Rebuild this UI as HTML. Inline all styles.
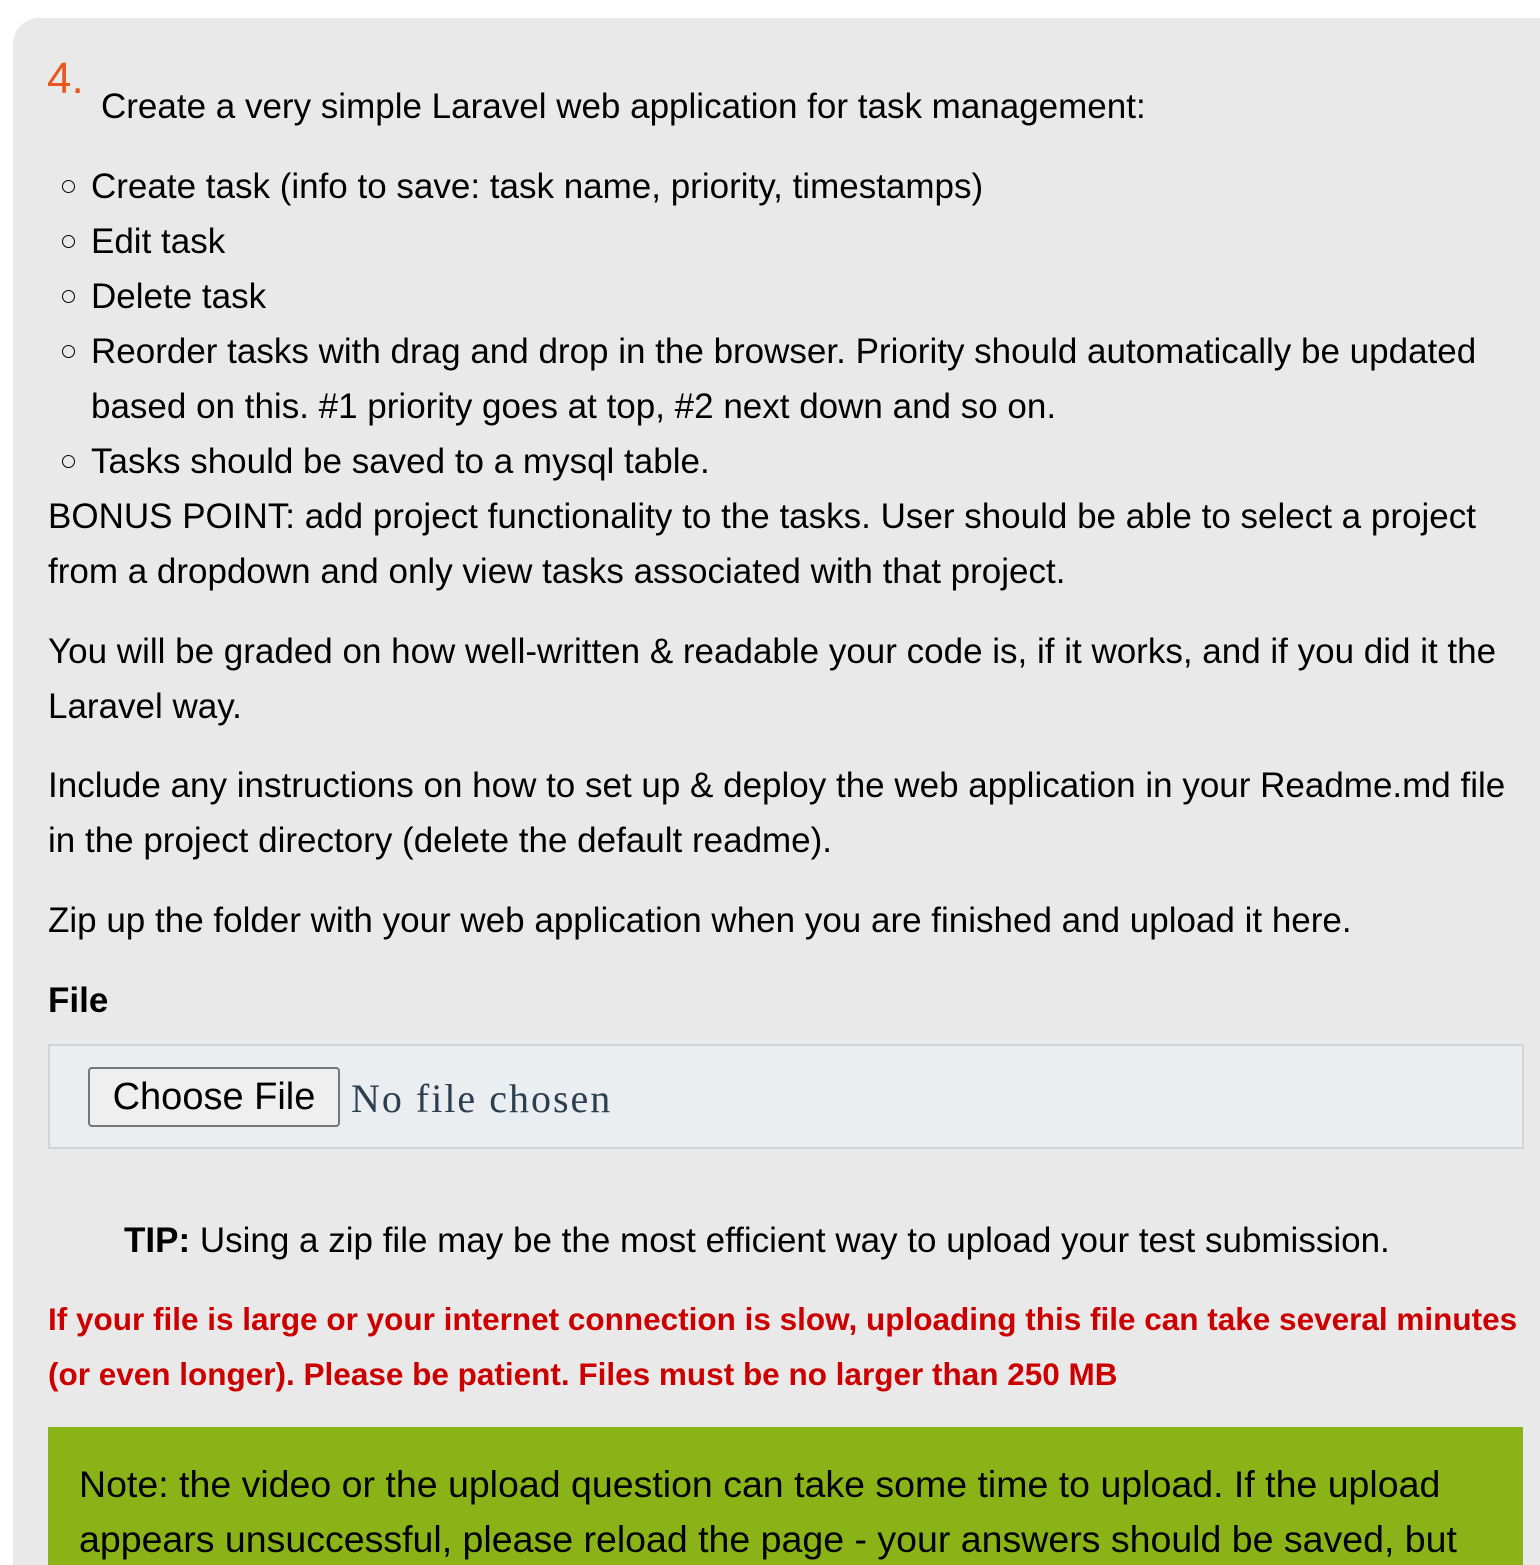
<!DOCTYPE html>
<html><head><meta charset="utf-8"><style>
html,body{margin:0;width:1540px;height:1565px;overflow:hidden}
body{background:#fff;font-family:"Liberation Sans",Arial,sans-serif;color:#000;position:relative}
.card{position:absolute;left:13px;top:18px;width:1527px;height:1547px;background:#e9e9e9;border-radius:26px 0 0 0}
.l{position:absolute;font-size:35px;line-height:55px;white-space:nowrap}
.b{position:absolute;left:62px;width:11px;height:11px;border:1.5px solid #000;border-radius:50%}
.red{color:#cc0000;font-weight:bold;font-size:31.5px}
</style></head><body>
<div class="card"></div>
<div class="l" style="left:47px;top:51px;font-size:44px;color:#e8571c">4.</div>
<div class="l" style="left:101px;top:79px">Create a very simple Laravel web application for task management:</div>
<div class="b" style="top:180px"></div><div class="l" style="left:91px;top:159px">Create task (info to save: task name, priority, timestamps)</div>
<div class="b" style="top:235px"></div><div class="l" style="left:91px;top:214px">Edit task</div>
<div class="b" style="top:290px"></div><div class="l" style="left:91px;top:269px">Delete task</div>
<div class="b" style="top:345px"></div><div class="l" style="left:91px;top:324px">Reorder tasks with drag and drop in the browser. Priority should automatically be updated</div>
<div class="l" style="left:91px;top:379px">based on this. #1 priority goes at top, #2 next down and so on.</div>
<div class="b" style="top:455px"></div><div class="l" style="left:91px;top:434px">Tasks should be saved to a mysql table.</div>
<div class="l" style="left:48px;top:489px">BONUS POINT: add project functionality to the tasks. User should be able to select a project</div>
<div class="l" style="left:48px;top:544px">from a dropdown and only view tasks associated with that project.</div>
<div class="l" style="left:48px;top:624px">You will be graded on how well-written &amp; readable your code is, if it works, and if you did it the</div>
<div class="l" style="left:48px;top:679px">Laravel way.</div>
<div class="l" style="left:48px;top:758px">Include any instructions on how to set up &amp; deploy the web application in your Readme.md file</div>
<div class="l" style="left:48px;top:813px">in the project directory (delete the default readme).</div>
<div class="l" style="left:48px;top:893px">Zip up the folder with your web application when you are finished and upload it here.</div>
<div class="l" style="left:48px;top:973px;font-weight:bold">File</div>
<div style="position:absolute;left:48px;top:1044px;width:1472px;height:101px;background:#ebeef1;border:2px solid #d3d3d3"></div>
<div style="position:absolute;left:88px;top:1067px;width:248px;height:56px;border:2px solid #767676;border-radius:4px;background:#efefef;box-sizing:content-box;font-size:38px;line-height:56px;text-align:center">Choose File</div>
<div class="l" style="left:351px;top:1071px;font-family:'Liberation Serif',serif;font-size:40px;color:#2c3e50;letter-spacing:2px">No file chosen</div>
<div class="l" style="left:124px;top:1213px"><b>TIP:</b> Using a zip file may be the most efficient way to upload your test submission.</div>
<div class="l red" style="left:48px;top:1292px">If your file is large or your internet connection is slow, uploading this file can take several minutes</div>
<div class="l red" style="left:48px;top:1347px">(or even longer). Please be patient. Files must be no larger than 250 MB</div>
<div style="position:absolute;left:48px;top:1427px;width:1475px;height:138px;background:#8ab318"></div>
<div class="l" style="left:79px;top:1457px;font-size:37.5px">Note: the video or the upload question can take some time to upload. If the upload</div>
<div class="l" style="left:79px;top:1512px;font-size:37.5px">appears unsuccessful, please reload the page - your answers should be saved, but</div>
</body></html>
